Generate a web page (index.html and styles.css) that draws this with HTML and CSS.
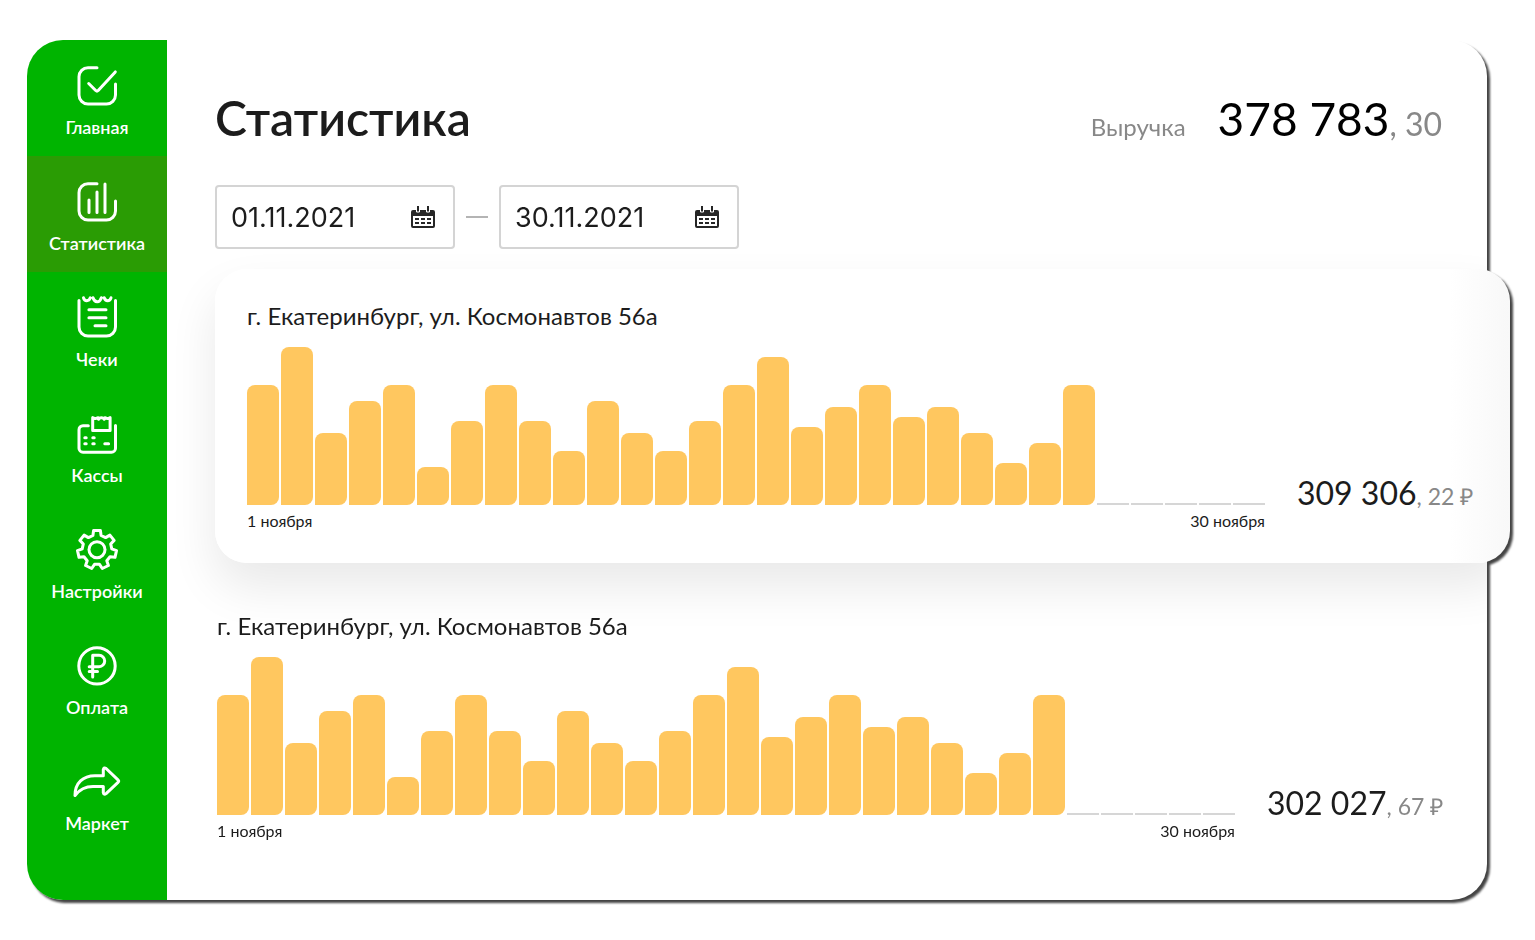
FILE: index.html
```html
<!DOCTYPE html>
<html lang="ru">
<head>
<meta charset="utf-8">
<meta name="viewport" content="width=device-width, initial-scale=1">
<title>Статистика</title>
<link rel="stylesheet" href="styles.css">
</head>
<body>
<div class="app">
  <nav class="sidebar" aria-label="Основное меню">
    <a class="nav-item" href="#home">
      <svg class="nav-icon" viewBox="0 0 44 44" aria-hidden="true"><path d="M22 3.700H13a9 9 0 0 0-9 9V31a9 9 0 0 0 9 9h18.500a9 9 0 0 0 9-9V20M13.700 19.500l7 7q1.300 1.200 2.500 0L40.300 7.900"/></svg>
      <span>Главная</span>
    </a>
    <a class="nav-item nav-item-active" href="#stats" aria-current="page">
      <svg class="nav-icon" viewBox="0 0 44 44" aria-hidden="true"><path d="M22 3.700H13a9 9 0 0 0-9 9V31a9 9 0 0 0 9 9h18.500a9 9 0 0 0 9-9V21M14 20v12.500M22 12v20.500M30 4v28.500"/></svg>
      <span>Статистика</span>
    </a>
    <a class="nav-item" href="#receipts">
      <svg class="nav-icon" viewBox="0 0 44 44" aria-hidden="true"><path d="M4 4.500V31a9 9 0 0 0 9 9h18.500a9 9 0 0 0 9-9V4.500M8.500 1.800c1 3.800 5.500 3.800 6.800 0M18 1.800c1.600 5.400 6.700 5.400 8.400 0M29.200 1.800c1.200 3.800 5.700 3.800 6.800 0M13.900 13.700H31M13.900 21.700H31M20 29.700h11"/></svg>
      <span>Чеки</span>
    </a>
    <a class="nav-item" href="#registers">
      <svg class="nav-icon" viewBox="0 0 44 44" aria-hidden="true"><path d="M13.300 13.700H8a4 4 0 0 0-4 4v18.500a4 4 0 0 0 4 4h28.500a4 4 0 0 0 4-4V13.500M17.700 5.500v12.900h17.400V5.500M17.700 5.800l2.600.8 2.800-.8M23.500 7.200c1-1.800 4.800-1.800 5.800 0M30 5.800l2.500.8 2.600-.8M9.800 25.700h1.400M17.800 25.700h1.400M9.800 31.700h1.400M17.800 31.700h1.400M29.800 31.700h3.800"/></svg>
      <span>Кассы</span>
    </a>
    <a class="nav-item" href="#settings">
      <svg class="nav-icon" viewBox="0 0 44 44" aria-hidden="true"><path d="M17.900 7.500L18.600 2.500H25.400L26.100 7.500L30.600 9.600L34.900 7.100L39.100 12.400L35.700 16L36.800 20.900L41.500 22.700L40 29.300L35 28.800L31.800 32.800L33.400 37.500L27.300 40.500L24.500 36.300H19.500L16.700 40.500L10.600 37.500L12.200 32.800L9 28.800L4 29.300L2.500 22.700L7.200 20.900L8.300 16L4.900 12.400L9.100 7.100L13.400 9.600Z"/><circle cx="22" cy="21.700" r="8"/></svg>
      <span>Настройки</span>
    </a>
    <a class="nav-item" href="#payment">
      <svg class="nav-icon" viewBox="0 0 44 44" aria-hidden="true"><circle cx="22" cy="21.900" r="18.200"/><path d="M17.700 33V11.300h6.300a5.700 5.700 0 0 1 0 11.400h-9.800M14.200 27.500h8.300"/></svg>
      <span>Оплата</span>
    </a>
    <a class="nav-item" href="#market">
      <svg class="nav-icon" viewBox="0 0 44 44" aria-hidden="true"><path d="M0 35.500C0 23 8 15.700 20 15.700h8.300V9.500q.6-2.600 2.800-1L43 19.800q1.500 1.300 0 2.600L31.100 33.600q-2.200 1.600-2.800-1V26.500H18C10 26.500 4.500 29.500 0 35.500Z"/></svg>
      <span>Маркет</span>
    </a>
  </nav>

  <main class="content">
    <header class="page-header">
      <h1 class="page-title">Статистика</h1>
      <p class="revenue"><span class="revenue-label">Выручка</span><span class="revenue-value">378 783<span class="revenue-cents">, 30</span></span></p>
    </header>

    <form class="period">
      <div class="date-field">
        <input class="date-input" type="text" value="01.11.2021" aria-label="Начало периода">
        <button class="date-button" type="button" aria-label="Выбрать начало периода">
          <svg class="date-icon" viewBox="0 0 24 22" aria-hidden="true"><path fill-rule="evenodd" d="M2 4H6V0H8V4H16V0H18V4H22a2 2 0 0 1 2 2V20a2 2 0 0 1-2 2H2a2 2 0 0 1-2-2V6a2 2 0 0 1 2-2ZM2 10V20H22V10ZM4 12h4v2H4ZM10 12h4v2h-4ZM16 12h4v2h-4ZM4 16h4v2H4ZM10 16h4v2h-4ZM16 16h4v2h-4Z"/><path class="date-icon-gap" d="M5.500 4v2h3V4M15.500 4v2h3V4"/></svg>
        </button>
      </div>
      <span class="period-dash"></span>
      <div class="date-field">
        <input class="date-input" type="text" value="30.11.2021" aria-label="Конец периода">
        <button class="date-button" type="button" aria-label="Выбрать конец периода">
          <svg class="date-icon" viewBox="0 0 24 22" aria-hidden="true"><path fill-rule="evenodd" d="M2 4H6V0H8V4H16V0H18V4H22a2 2 0 0 1 2 2V20a2 2 0 0 1-2 2H2a2 2 0 0 1-2-2V6a2 2 0 0 1 2-2ZM2 10V20H22V10ZM4 12h4v2H4ZM10 12h4v2h-4ZM16 12h4v2h-4ZM4 16h4v2H4ZM10 16h4v2h-4ZM16 16h4v2h-4Z"/><path class="date-icon-gap" d="M5.500 4v2h3V4M15.500 4v2h3V4"/></svg>
        </button>
      </div>
    </form>

    <section class="store store-raised">
      <h2 class="store-title">г. Екатеринбург, ул. Космонавтов 56а</h2>
      <div class="store-body">
        <div class="chart" role="img" aria-label="Выручка по дням"></div>
        <p class="amount">309 306<span class="amount-cents">, 22 ₽</span></p>
        <div class="axis"><span>1 ноября</span><span>30 ноября</span></div>
      </div>
    </section>

    <section class="store">
      <h2 class="store-title">г. Екатеринбург, ул. Космонавтов 56а</h2>
      <div class="store-body">
        <div class="chart" role="img" aria-label="Выручка по дням"></div>
        <p class="amount">302 027<span class="amount-cents">, 67 ₽</span></p>
        <div class="axis"><span>1 ноября</span><span>30 ноября</span></div>
      </div>
    </section>
  </main>
</div>
<script src="charts.js"></script>
</body>
</html>
```
FILE: styles.css
```css
* {
  box-sizing: border-box;
}

body {
  margin: 0;
  padding: 40px 48px 40px 27px;
  background: #fff;
  color: #1c1c1c;
  font-family: Lato, "Liberation Sans", sans-serif;
}

h1, h2, p {
  margin: 0;
}

.app {
  display: flex;
  min-height: calc(100vh - 80px);
  border-radius: 36px;
  background: #fff;
  filter: drop-shadow(3px 3px 1px #444);
}

.sidebar {
  flex: none;
  width: 140px;
  border-radius: 36px 0 0 36px;
  background: #00b400;
  overflow: hidden;
}

.nav-item {
  display: flex;
  flex-direction: column;
  align-items: center;
  gap: 8px;
  padding: 24px 0 18px;
  color: #fff;
  font-size: 18px;
  font-weight: 600;
  line-height: 22px;
  text-decoration: none;
}

.nav-item-active {
  background: #2a9c04;
}

.nav-icon {
  width: 44px;
  height: 44px;
  overflow: visible;
  fill: none;
  stroke: #fff;
  stroke-width: 3;
  stroke-linecap: round;
  stroke-linejoin: round;
}

.content {
  flex: 1;
  min-width: 0;
  padding: 48px 45px 48px 48px;
}

.page-header {
  display: flex;
  justify-content: space-between;
  align-items: baseline;
}

.page-title {
  font-size: 48px;
  font-weight: 600;
  line-height: 60px;
}

.revenue {
  display: flex;
  align-items: baseline;
  gap: 32px;
}

.revenue-label {
  color: #888;
  font-size: 24px;
}

.revenue-value {
  color: #000;
  font-size: 46px;
  line-height: 60px;
}

.revenue-cents {
  color: #888;
  font-size: 32px;
  line-height: 32px;
}

.period {
  display: flex;
  align-items: center;
  gap: 11px;
  margin: 36px 0 20px;
}

.date-field {
  display: flex;
  align-items: center;
  width: 240px;
  height: 64px;
  padding: 0 18px 0 14px;
  border: 2px solid #d4d4d4;
  border-radius: 4px;
  background: #fff;
}

.date-input {
  flex: 1;
  min-width: 0;
  padding: 0;
  border: 0;
  background: none;
  color: #1c1c1c;
  font-family: Inter, "Liberation Sans", sans-serif;
  font-size: 27px;
}

.date-button {
  padding: 0;
  border: 0;
  background: none;
}

.date-icon {
  display: block;
  width: 24px;
  height: 22px;
  fill: #262626;
}

.date-icon-gap {
  fill: none;
  stroke: #fff;
  stroke-width: 1;
}

.period-dash {
  width: 22px;
  height: 2px;
  background: #b4b4b4;
}

.store {
  padding: 48px 0 0 2px;
}

.store-raised {
  position: relative;
  margin-right: -68px;
  padding: 32px 38px 30px 32px;
  border-radius: 32px;
  background: linear-gradient(to right, #fff calc(100% - 60px), #f8f8f8);
}

/* Soft shadow, cut off at the edges of the content area */
.store-raised::before {
  content: "";
  position: absolute;
  z-index: -1;
  inset: 0;
  border-radius: 32px;
  box-shadow: 0 24px 48px rgba(0, 0, 0, 0.09);
  clip-path: inset(-60px 23px -100px -48px);
}

.store-title {
  font-size: 24px;
  font-weight: 400;
  line-height: 30px;
}

.store-body {
  display: grid;
  grid-template-columns: 1fr 175px;
  column-gap: 32px;
  margin-top: 16px;
}

.chart {
  display: flex;
  align-items: flex-end;
  gap: 2px;
  height: 162px;
  padding-bottom: 4px;
}

.bar {
  flex: 1;
  border-radius: 8px 8px 8px 0;
  background: #ffc75f;
}

.bar-empty {
  height: 2px;
  border-radius: 0;
  background: #d6d6d6;
}

.amount {
  align-self: end;
  font-size: 32px;
  line-height: 32px;
  white-space: nowrap;
}

.amount-cents {
  color: #888;
  font-size: 23px;
  line-height: 24px;
}

.axis {
  display: flex;
  justify-content: space-between;
  font-size: 16px;
  line-height: 24px;
}
```
FILE: charts.js
```js
const daily = [120, 158, 72, 104, 120, 38, 84, 120, 84, 54, 104, 72, 54, 84, 120,
  148, 78, 98, 120, 88, 98, 72, 42, 62, 120, 0, 0, 0, 0, 0];

document.querySelectorAll('.chart').forEach((chart) => {
  daily.forEach((value) => {
    const bar = document.createElement('div');
    bar.className = value ? 'bar' : 'bar bar-empty';
    if (value) bar.style.height = value + 'px';
    chart.append(bar);
  });
});
```
